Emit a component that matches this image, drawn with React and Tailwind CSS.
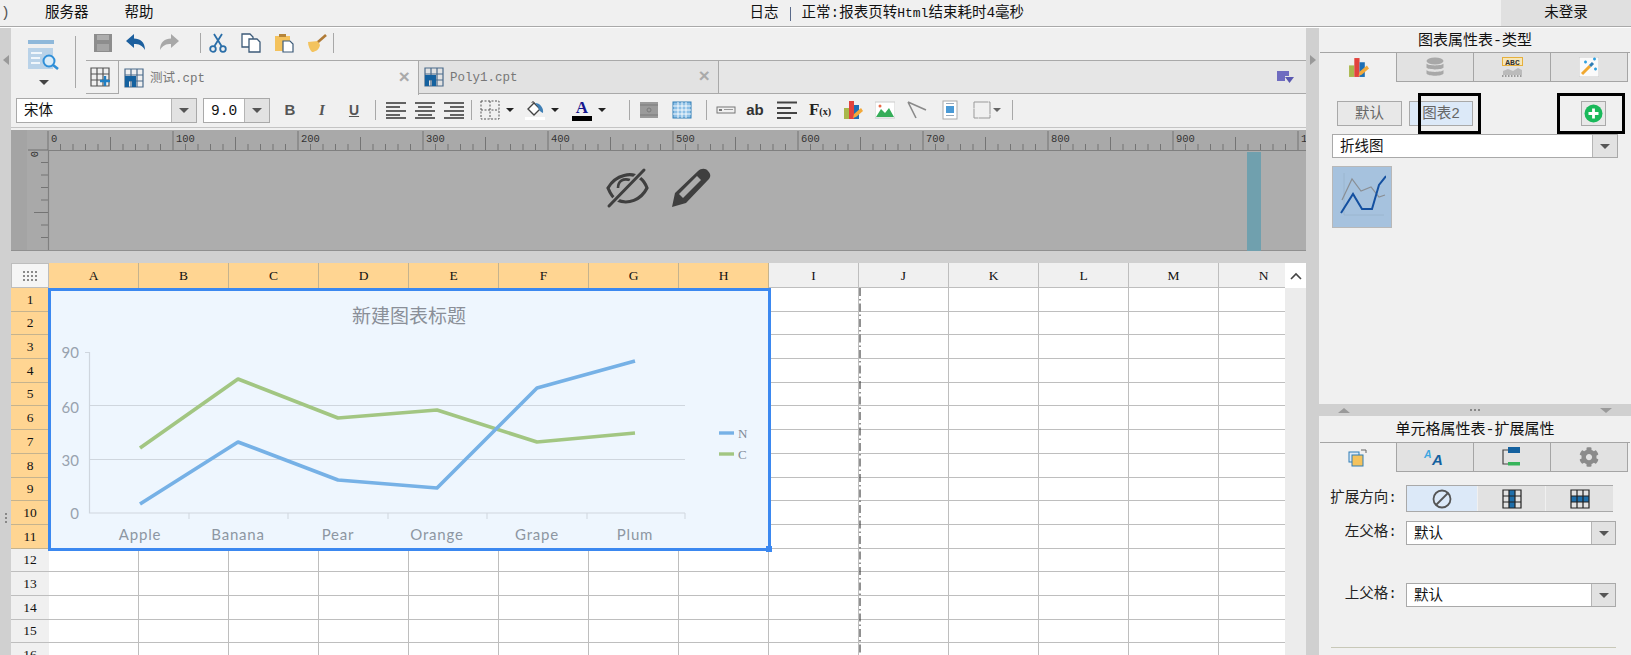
import { FaCog } from 'react-icons/fa'

const cols = ['A', 'B', 'C', 'D', 'E', 'F', 'G', 'H', 'I', 'J', 'K', 'L', 'M', 'N']
const rows = [1, 2, 3, 4, 5, 6, 7, 8, 9, 10, 11, 12, 13, 14, 15, 16]
const pointsX = [140, 238, 338, 437, 537, 635]
const blueY = [504, 442, 480, 488, 388, 361]
const greenY = [448, 379, 418, 410, 442, 433]
const line = (ys) => ys.map((y, i) => `${pointsX[i]},${y}`).join(' ')

function Icon({ size = 20, children, className = '' }) {
  return (
    <svg width={size} height={size} viewBox="0 0 20 20" className={className}>
      {children}
    </svg>
  )
}

function ChartIcon({ size = 20 }) {
  return (
    <Icon size={size}>
      <rect x="1" y="8" width="5" height="11" fill="#a9b84c" />
      <rect x="6" y="1" width="5" height="18" fill="#e2433d" />
      <rect x="11" y="5" width="5" height="14" fill="#1d6fb5" />
      <path d="M10 18 L11 14 L18 8 L20 11 L13 17Z" fill="#f2a93b" />
    </Icon>
  )
}

function SheetIcon({ plus }) {
  return (
    <Icon>
      <path d="M1 1H19V19H1Z M7 1V19 M13 1V19 M1 7H19 M1 13H19" fill="none" stroke={plus ? '#555' : '#4a6a8a'} strokeWidth="1.2" />
      {plus ? (
        <path d="M15 9V19 M10 14H20" stroke="#1f7fc4" strokeWidth="2.4" />
      ) : (
        <path d="M1 8H12V19H8V13H5V19H1Z" fill="#14619f" />
      )}
    </Icon>
  )
}

function Sep({ h = 'h-[20px]' }) {
  return <div className={`w-px ${h} bg-[#a8a8a8] shrink-0`} />
}

function Caret({ className = '' }) {
  return <div className={`w-0 h-0 border-x-[4px] border-x-transparent border-t-[4px] border-t-[#222] ${className}`} />
}

function Slot({ w = 'w-[33px]', children }) {
  return <div className={`${w} h-[24px] shrink-0 flex items-center justify-center gap-[6px]`}>{children}</div>
}

function Select({ value, className = '', arrow = 'w-[25px]' }) {
  return (
    <div className={`flex border border-[#a9a9a9] bg-white ${className}`}>
      <div className="flex-1 pl-[7px] text-[14.5px] leading-[25px] text-[#111] overflow-hidden">{value}</div>
      <div className={`${arrow} bg-[#e2e2e2] border-l border-[#b5b5b5] flex items-center justify-center`}>
        <div className="w-0 h-0 border-x-[5px] border-x-transparent border-t-[5px] border-t-[#555]" />
      </div>
    </div>
  )
}

function PanelTabs({ icons }) {
  return (
    <div className="flex h-[30px] w-[310px] ml-px border-t border-[#a5a5a5]">
      {icons.map((icon, i) => (
        <div
          key={i}
          className={
            i === 0
              ? 'w-[77px] flex items-center justify-center border-r border-[#a5a5a5]'
              : 'w-[77px] flex items-center justify-center border-r border-b border-[#a5a5a5] bg-[#e2e2e2]'
          }
        >
          {icon}
        </div>
      ))}
    </div>
  )
}

function Ruler() {
  const ticks = []
  for (let i = 0; i <= 100; i++) {
    const x = 48 + i * 12.5
    if (x > 1306) break
    const y1 = i % 10 === 0 ? 131 : i % 5 === 0 ? 137 : 144
    ticks.push(<line key={i} x1={x} x2={x} y1={y1} y2="150" stroke="#6e6e6e" strokeWidth="0.9" />)
    if (i % 10 === 0) {
      ticks.push(
        <text key={`t${i}`} x={x + 3} y="142" fontSize="10.5" fontFamily="Liberation Mono, monospace" fill="#333">
          {i * 10}
        </text>
      )
    }
  }
  const vticks = []
  for (let i = 1; i < 8; i++) {
    const y = 150 + i * 12.5
    vticks.push(<line key={i} x1={i === 5 ? 34 : 41} x2="48" y1={y} y2={y} stroke="#6e6e6e" strokeWidth="0.9" />)
  }
  return (
    <svg width="1295" height="121" viewBox="11 130 1295 121" className="block shrink-0">
      <rect x="11" y="130" width="1295" height="121" fill="#adadad" />
      <rect x="11" y="130" width="1295" height="20" fill="#a9a9a9" />
      <rect x="11" y="130" width="16" height="121" fill="#a4a4a4" />
      <rect x="27" y="150" width="21" height="101" fill="#a9a9a9" />
      {ticks}
      {vticks}
      <line x1="28" x2="48" y1="150" y2="150" stroke="#6e6e6e" />
      <text x="0" y="0" fontSize="10.5" fontFamily="Liberation Mono, monospace" fill="#333" transform="translate(31 151) rotate(90)">0</text>
      <line x1="48" x2="1306" y1="150.5" y2="150.5" stroke="#808080" strokeWidth="1.2" />
      <line x1="48.5" x2="48.5" y1="150" y2="251" stroke="#808080" strokeWidth="1.2" />
      <line x1="11" x2="1306" y1="250.5" y2="250.5" stroke="#909090" />
      <rect x="1247" y="152" width="14" height="99" fill="#70a0ae" />
      {/* hidden eye */}
      <g fill="none" stroke="#3f3f3f">
        <path d="M608 188 C616 174 632 172 640 178 C644 181 646 185 647 188 C641 200 628 205 617 200 C613 198 610 193 608 188Z" strokeWidth="3.2" />
        <path d="M618 188 C618 181 623 178 630 180" strokeWidth="2.6" />
        <path d="M644 170 L609 206" stroke="#adadad" strokeWidth="6" />
        <path d="M644 170 L609 206" strokeWidth="3" strokeLinecap="round" />
      </g>
      {/* pencil */}
      <path d="M672 207 L675 193 L698 171 C701 168 706 168 708 171 C711 174 711 177 708 180 L686 203Z" fill="#3f3f3f" />
      <path d="M679 194 L697 176 L701 180 L683 198Z" fill="#adadad" />
    </svg>
  )
}

function Chart() {
  const ticksX = [89, 189, 288, 388, 487, 587, 685]
  const labels = [[140, 'Apple'], [238, 'Banana'], [338, 'Pear'], [437, 'Orange'], [537, 'Grape'], [635, 'Plum']]
  const yLabels = [[358, '90'], [413, '60'], [466, '30'], [519, '0']]
  return (
    <div className="absolute left-[37px] top-[25px] w-[723px] h-[263px] border-[3px] border-[#3b88f0] bg-[#eef6fe]">
      <svg width="723" height="263" viewBox="48 288 723 263" className="absolute -left-[3px] -top-[3px]">
        <line x1="89" x2="685" y1="405.5" y2="405.5" stroke="#cfd6de" />
        <line x1="89" x2="685" y1="459.5" y2="459.5" stroke="#cfd6de" />
        <path d="M85 352.5H89.5V513H685" fill="none" stroke="#cfd6de" strokeWidth="1.2" />
        {ticksX.slice(1).map((x) => (
          <line key={x} x1={x} x2={x} y1="513" y2="519" stroke="#cfd6de" />
        ))}
        <polyline points={line(greenY)} fill="none" stroke="#a2c682" strokeWidth="3.7" strokeLinejoin="round" />
        <polyline points={line(blueY)} fill="none" stroke="#76b1e6" strokeWidth="3.7" strokeLinejoin="round" />
        <text x="409" y="323" textAnchor="middle" fontSize="19" fill="#8a8f98" fontFamily="Noto Sans CJK SC, sans-serif">新建图表标题</text>
        {yLabels.map(([y, t]) => (
          <text key={t} x="79" y={y} textAnchor="end" fontSize="15" fill="#98a2ae" fontFamily="Lato, sans-serif">{t}</text>
        ))}
        {labels.map(([x, t]) => (
          <text key={t} x={x} y="540" textAnchor="middle" fontSize="15" letterSpacing="0.8" fill="#8d96a2" fontFamily="Lato, sans-serif">{t}</text>
        ))}
        <line x1="719" x2="734" y1="433" y2="433" stroke="#76b1e6" strokeWidth="3.4" />
        <line x1="719" x2="734" y1="454" y2="454" stroke="#a2c682" strokeWidth="3.4" />
        <text x="738" y="438" fontSize="13" fill="#7f8a96" fontFamily="Liberation Serif, serif">N</text>
        <text x="738" y="459" fontSize="13" fill="#7f8a96" fontFamily="Liberation Serif, serif">C</text>
      </svg>
      <div className="absolute -right-[4px] -bottom-[4px] w-[6px] h-[6px] bg-[#3b88f0]" />
    </div>
  )
}

function Grid() {
  return (
    <div className="relative w-[1274px] overflow-hidden font-['Liberation_Serif',serif]">
      <div className="grid grid-cols-[38px_repeat(14,90px)]">
        <div className="h-[25px] bg-[#f5f5f5] border border-[#bdbdbd] flex items-center justify-center">
          <div className="grid grid-cols-4 gap-[2px]">
            {Array.from({ length: 12 }).map((_, i) => (
              <div key={i} className="w-[2px] h-[2px] bg-[#8a8a8a]" />
            ))}
          </div>
        </div>
        {cols.map((c, i) => (
          <div
            key={c}
            className={
              i < 8
                ? 'h-[25px] pt-[2px] bg-[#ffd592] border-r border-[#c5b38e] flex items-center justify-center text-[13.5px] text-[#111]'
                : 'h-[25px] pt-[2px] bg-[#f0f0f0] border-r border-b border-[#bebebe] flex items-center justify-center text-[13.5px] text-[#111]'
            }
          >
            {c}
          </div>
        ))}
        {rows.map((r) => (
          <div key={r} className="contents">
            <div
              className={
                r <= 11
                  ? 'h-[23.7px] pt-[1px] bg-[#ffd592] border-b border-[#c5b38e] flex items-center justify-center text-[13.5px] text-[#111]'
                  : 'h-[23.7px] pt-[1px] bg-[#f0f0f0] border-b border-[#bebebe] flex items-center justify-center text-[13.5px] text-[#111]'
              }
            >
              {r}
            </div>
            {cols.map((c) => (
              <div key={c} className="h-[23.7px] bg-white border-r border-b border-[#bebebe]" />
            ))}
          </div>
        ))}
      </div>
      <svg width="2" height="367" className="absolute left-[848px] top-[25px]">
        <line x1="1" x2="1" y1="0" y2="367" stroke="#222" strokeWidth="1" strokeDasharray="8 3 1.5 3" />
      </svg>
      <Chart />
    </div>
  )
}

function Toolbar() {
  return (
    <div className="h-[102px] shrink-0 flex flex-col bg-[#f0f0f0]">
      <div className="flex h-[66px]">
        <div className="w-[64px] shrink-0 flex flex-col items-center pt-[11px] pl-[1px]">
          <svg width="32" height="32" viewBox="0 0 32 32">
            <rect x="0" y="1" width="26" height="4" fill="#8fb8da" />
            <rect x="0" y="9" width="25" height="21" fill="#b9d2e8" />
            <path d="M3 14H14 M3 19H12 M3 24H12" stroke="#f0f6fb" strokeWidth="2" />
            <circle cx="21" cy="22" r="5.5" fill="#dbecf8" stroke="#2f8fd8" strokeWidth="2" />
            <path d="M25 26L30 30" stroke="#2f8fd8" strokeWidth="2.6" />
          </svg>
          <Caret className="mt-[9px] border-x-[5px] border-t-[5px] border-t-[#444]" />
        </div>
        <div className="w-px h-[52px] mt-[8px] bg-[#a8a8a8] shrink-0" />
        <div className="flex-1 ml-[10px] flex flex-col min-w-0">
          <div className="h-[32px] pb-[2px] flex items-center">
            <Slot>
              <Icon>
                <path d="M1 1H19V19H1Z" fill="#8d8d8d" />
                <rect x="4" y="2" width="12" height="5" fill="#adadad" />
                <rect x="4" y="11" width="12" height="7" fill="#a5a5a5" />
              </Icon>
            </Slot>
            <Slot>
              <Icon>
                <path d="M0 8 L8 1 V5.5 C14 5.5 19 9 19 17 C16 12 13 11 8 11 V15Z" fill="#1c5f9e" />
              </Icon>
            </Slot>
            <Slot>
              <Icon>
                <path d="M20 8 L12 1 V5.5 C6 5.5 1 9 1 17 C4 12 7 11 12 11 V15Z" fill="#a8a8a8" />
              </Icon>
            </Slot>
            <div className="w-[15px] shrink-0" />
            <Sep />
            <Slot>
              <Icon>
                <path d="M6.5 13 L14 1 M13.5 13 L6 1" stroke="#2a6ea8" strokeWidth="1.8" fill="none" />
                <circle cx="5" cy="16" r="2.8" fill="none" stroke="#2a6ea8" strokeWidth="1.8" />
                <circle cx="15" cy="16" r="2.8" fill="none" stroke="#2a6ea8" strokeWidth="1.8" />
              </Icon>
            </Slot>
            <Slot>
              <Icon>
                <path d="M1 1H9L12 4V14H1Z" fill="#fff" stroke="#3c5a78" strokeWidth="1.3" />
                <path d="M8 6H16L19 9V19H8Z" fill="#fff" stroke="#3c5a78" strokeWidth="1.3" />
              </Icon>
            </Slot>
            <Slot>
              <Icon>
                <rect x="1" y="3" width="15" height="15" fill="#f4c25c" />
                <rect x="5" y="1" width="7" height="3" fill="#b5853a" />
                <path d="M9 8H16L19 11V19H9Z" fill="#fff" stroke="#3c5a78" strokeWidth="1.2" />
              </Icon>
            </Slot>
            <Slot>
              <Icon>
                <path d="M1 9 L11 8 L13 12 C12 17 8 19 5 19 C3 17 1 13 1 9Z" fill="#f3c35e" />
                <path d="M11 9 L19 2" stroke="#b07a35" strokeWidth="2.6" />
              </Icon>
            </Slot>
            <Sep />
          </div>
          <div className="h-[34px] flex border-y border-[#a9a9a9] bg-[#e6e6e6] relative">
            <div className="w-[33px] shrink-0 flex items-center pl-[4px] bg-[#f0f0f0] border-r border-[#a9a9a9]">
              <SheetIcon plus />
            </div>
            <div className="w-[300px] shrink-0 flex items-center pl-[5px] pr-[8px] gap-[6px] bg-[#f0f0f0] border-r border-[#a9a9a9] h-[34px]">
              <SheetIcon />
              <span className="flex-1 pt-[2px] text-[12.5px] text-[#777] font-['Liberation_Mono','Noto_Sans_CJK_SC',monospace]">测试.cpt</span>
              <span className="text-[#aaa] text-[19px] leading-none font-bold">×</span>
            </div>
            <div className="w-[300px] shrink-0 flex items-center pl-[5px] pr-[8px] gap-[6px] bg-[#e2e2e2] border-r border-[#a9a9a9]">
              <SheetIcon />
              <span className="flex-1 pt-[2px] text-[12.5px] text-[#777] font-['Liberation_Mono','Noto_Sans_CJK_SC',monospace]">Poly1.cpt</span>
              <span className="text-[#aaa] text-[19px] leading-none font-bold">×</span>
            </div>
            <div className="flex-1 flex items-center justify-end pr-[12px]">
              <svg width="17" height="12" viewBox="0 0 17 12">
                <path d="M0 0H12V5H8V10H0Z" fill="#6f6cc0" />
                <path d="M8 6H17L12.5 12Z" fill="#5a58b0" />
              </svg>
            </div>
          </div>
        </div>
      </div>
      <div className="h-[34px] flex items-start pt-[4px] pl-[5px] border-b border-[#c4c4c4]">
        <Select value="宋体" className="w-[181px] h-[25px]" />
        <Select value="9.0" className="w-[67px] h-[25px] ml-[6px]" />
        <div className="flex items-center ml-[4px]">
          <Slot w="w-[32px]"><span className="text-[15px] font-bold text-[#555] font-['Liberation_Sans',sans-serif]">B</span></Slot>
          <Slot w="w-[32px]"><span className="text-[15px] font-bold italic text-[#555] font-['Liberation_Serif',serif]">I</span></Slot>
          <Slot w="w-[32px]"><span className="text-[14px] font-bold underline text-[#555] font-['Liberation_Sans',sans-serif]">U</span></Slot>
          <div className="w-[5px]" />
          <Sep />
          <div className="w-[5px]" />
          <Slot w="w-[29px]"><Icon><path d="M0 3H20 M0 7H14 M0 11H20 M0 15H14 M0 18H20" stroke="#333" strokeWidth="1.6" /></Icon></Slot>
          <Slot w="w-[29px]"><Icon><path d="M0 3H20 M3 7H17 M0 11H20 M3 15H17 M0 18H20" stroke="#333" strokeWidth="1.6" /></Icon></Slot>
          <Slot w="w-[29px]"><Icon><path d="M0 3H20 M6 7H20 M0 11H20 M6 15H20 M0 18H20" stroke="#333" strokeWidth="1.6" /></Icon></Slot>
          <div className="w-[3px]" />
          <Sep />
          <div className="w-[3px]" />
          <Slot w="w-[44px]">
            <Icon><path d="M1 1H19V19H1Z M10 1V19 M1 10H19" fill="none" stroke="#555" strokeWidth="1" strokeDasharray="2 1.5" /></Icon>
            <Caret />
          </Slot>
          <Slot w="w-[46px]">
            <Icon>
              <rect x="0" y="17" width="20" height="3" fill="#fff" />
              <path d="M3 9L9 3L15 9L9 15Z" fill="#fff" stroke="#444" strokeWidth="1.4" />
              <path d="M9 3C9 1 7 1 7 3" fill="none" stroke="#444" />
              <path d="M10 3C15 3 19 8 18 13C15 12 14 10 13 7Z" fill="#3f7fb5" />
            </Icon>
            <Caret />
          </Slot>
          <Slot w="w-[48px]">
            <div className="flex flex-col items-center w-[20px]">
              <span className="text-[17px] leading-[15px] font-bold text-[#16168f] font-['Liberation_Serif',serif]">A</span>
              <div className="w-[20px] h-[5px] bg-black mt-[1px]" />
            </div>
            <Caret />
          </Slot>
          <div className="w-[16px]" />
          <Sep />
          <Slot w="w-[38px]">
            <Icon><rect x="1" y="2" width="18" height="16" fill="#9a9a9a" /><path d="M1 5H19 M1 15H19" stroke="#7a7a7a" /><circle cx="10" cy="10" r="2" fill="none" stroke="#7a7a7a" /></Icon>
          </Slot>
          <Slot w="w-[28px]">
            <Icon><rect x="1" y="2" width="18" height="16" fill="#8ec0e6" stroke="#2e7db5" /><path d="M1 6H19 M1 10H19 M1 14H19 M6 2V18 M10 2V18 M14 2V18" stroke="#fff" strokeWidth="0.9" /></Icon>
          </Slot>
          <div className="w-[10px]" />
          <Sep />
          <div className="w-[5px]" />
          <Slot w="w-[28px]">
            <Icon><rect x="1" y="7" width="18" height="6" fill="none" stroke="#777" /><rect x="3" y="9" width="3" height="2" fill="#777" /><rect x="8" y="9" width="9" height="1" fill="#999" /></Icon>
          </Slot>
          <Slot w="w-[30px]"><span className="text-[15px] font-bold text-[#333] font-['Liberation_Sans',sans-serif]">ab</span></Slot>
          <Slot w="w-[33px]"><Icon><path d="M0 2.5H20 M0 8H14 M0 13H20 M0 18H14" stroke="#444" strokeWidth="2" /></Icon></Slot>
          <Slot w="w-[34px]"><span className="text-[17px] font-bold text-[#222] font-['Liberation_Serif',serif] whitespace-nowrap">F<span className="text-[10px]">(x)</span></span></Slot>
          <Slot w="w-[32px]"><ChartIcon /></Slot>
          <Slot w="w-[32px]">
            <Icon><rect x="0" y="2" width="20" height="16" fill="#fff" stroke="#ccc" /><path d="M1 17L6 9L10 13L14 8L19 17Z" fill="#36ad59" /><circle cx="5" cy="6" r="1.5" fill="#ea6a4a" /></Icon>
          </Slot>
          <Slot w="w-[32px]"><Icon><path d="M1 2L19 10 M1 2L9 18" stroke="#8a8a8a" strokeWidth="1.6" fill="none" /></Icon></Slot>
          <Slot w="w-[33px]">
            <Icon><rect x="3" y="1" width="14" height="18" fill="#fff" stroke="#aaa" /><rect x="6" y="6" width="8" height="7" fill="#4a9ad6" /><path d="M6 3.5H14 M6 15.5H14" stroke="#9ab" /></Icon>
          </Slot>
          <Slot w="w-[40px]">
            <Icon><rect x="2" y="2" width="16" height="16" fill="none" stroke="#999" strokeDasharray="14 0.5" /></Icon>
            <Caret className="-ml-[5px] border-t-[#666]" />
          </Slot>
          <div className="w-[6px]" />
          <Sep />
        </div>
      </div>
    </div>
  )
}

function RightPanel() {
  return (
    <div className="w-[312px] shrink-0 bg-[#f0f0f0] flex flex-col">
      <div className="h-[376px] shrink-0">
        <div className="h-[24px] text-center text-[15px] leading-[28px] text-[#111]">图表属性表-类型</div>
        <PanelTabs
          icons={[
            <ChartIcon key="chart" size={21} />,
            <Icon key="db" size={20}>
              <ellipse cx="10" cy="4" rx="8.5" ry="3.5" fill="#a8a8a8" />
              <path d="M1.5 6.5C3 9 17 9 18.5 6.5V10.5C17 13 3 13 1.5 10.5Z M1.5 13C3 15.5 17 15.5 18.5 13V16.5C17 19.5 3 19.5 1.5 16.5Z" fill="#a8a8a8" />
            </Icon>,
            <svg key="abc" width="21" height="20" viewBox="0 0 21 20">
              <rect x="0.5" y="0.5" width="20" height="8" fill="#f6e6b8" stroke="#e6b03c" />
              <text x="10.5" y="7.5" textAnchor="middle" fontSize="8" fontWeight="bold" fill="#333" fontFamily="Liberation Mono, monospace">ABC</text>
              <path d="M1 18V14L6 12L11 14L16 11L20 13V18Z" fill="#bbb" />
              <path d="M0 19H21" stroke="#555" strokeDasharray="1.5 1.5" />
            </svg>,
            <Icon key="wand" size={20}>
              <rect x="0" y="0" width="20" height="20" fill="#fafafa" stroke="#ccc" />
              <path d="M3 17L11 9" stroke="#f0a830" strokeWidth="3" />
              <path d="M11 9L14 6" stroke="#2e7db5" strokeWidth="3" />
              <path d="M5 5H8 M6.5 3.5V6.5 M14 2H17 M15.5 .5V3.5 M15 12H18 M16.5 10.5V13.5" stroke="#2ea0e0" strokeWidth="1.5" />
            </Icon>,
          ]}
        />
        <div className="relative flex items-center mt-[19px] pl-[18px] h-[25px]">
          <div className="w-[65px] h-[25px] border border-[#a9a9a9] bg-[#e8e8e8] text-center text-[14.5px] leading-[25px] text-[#666]">默认</div>
          <div className="w-[64px] h-[25px] ml-[7px] border border-[#a9a9a9] bg-[#dce9f8] text-center text-[14.5px] leading-[25px] text-[#666]">图表2</div>
          <div className="ml-auto mr-[25px] w-[25px] h-[25px] border border-[#a9a9a9] bg-[#e8e8e8] flex items-center justify-center">
            <svg width="19" height="19" viewBox="0 0 19 19">
              <circle cx="9.5" cy="9.5" r="9" fill="#19b95a" />
              <path d="M9.5 4.5V14.5 M4.5 9.5H14.5" stroke="#fff" strokeWidth="2.8" />
            </svg>
          </div>
          <div className="absolute left-[99px] -top-[8px] w-[63px] h-[41px] border-[3px] border-black" />
          <div className="absolute left-[238px] -top-[8px] w-[68px] h-[41px] border-[3px] border-black" />
        </div>
        <Select value="折线图" className="ml-[13px] mt-[8px] w-[286px] h-[24px]" />
        <div className="ml-[13px] mt-[8px] w-[60px] h-[62px] bg-[#a6c2de] border border-[#b8b8b8] flex items-center justify-center">
          <svg width="48" height="48" viewBox="0 0 48 48">
            <path d="M6 0V42H46" fill="none" stroke="#9ab4cc" strokeWidth="0.8" />
            <path d="M4 27L14 6L23 18L33 14L41 24L47 22" fill="none" stroke="#8a8f95" strokeWidth="1.2" />
            <path d="M3 40L15 21L24 36L34 36L41 12L48 3" fill="none" stroke="#1450a0" strokeWidth="2" />
          </svg>
        </div>
      </div>
      <div className="h-[12px] shrink-0 bg-[#d0d0d0] flex items-center justify-between px-[19px]">
        <div className="w-0 h-0 border-x-[6px] border-x-transparent border-b-[5px] border-b-[#9a9a9a]" />
        <div className="flex gap-[2px]">
          <div className="w-[2px] h-[2px] bg-[#888]" />
          <div className="w-[2px] h-[2px] bg-[#888]" />
          <div className="w-[2px] h-[2px] bg-[#888]" />
        </div>
        <div className="w-0 h-0 border-x-[6px] border-x-transparent border-t-[5px] border-t-[#9a9a9a]" />
      </div>
      <div className="h-[26px] text-center text-[15px] leading-[30px] text-[#111]">单元格属性表-扩展属性</div>
      <PanelTabs
        icons={[
          <Icon key="expand" size={20}>
            <rect x="1" y="4" width="10" height="10" fill="#dbe9f6" stroke="#2e7db5" />
            <rect x="4" y="7" width="11" height="11" fill="#f4c25c" stroke="#2e7db5" />
            <path d="M13 2H18V5" fill="none" stroke="#666" />
          </Icon>,
          <svg key="aa" width="20" height="20" viewBox="0 0 20 20" className="overflow-visible">
            <text x="-1" y="11" fontSize="10.5" fontWeight="bold" fontStyle="italic" fill="#3fa7e0" fontFamily="Liberation Sans, sans-serif">A</text>
            <text x="7" y="18" fontSize="15" fontWeight="bold" fontStyle="italic" fill="#14619f" fontFamily="Liberation Sans, sans-serif">A</text>
          </svg>,
          <Icon key="tree" size={20}>
            <rect x="6" y="0" width="12" height="6" fill="#14619f" />
            <rect x="6" y="15" width="12" height="3.5" fill="#36b45a" />
            <path d="M6 3H1V17H6" fill="none" stroke="#444" strokeWidth="1.2" />
          </Icon>,
          <FaCog key="cog" size={20} color="#8b8b8b" />,
        ]}
      />
      <div className="flex items-center mt-[13px] h-[27px]">
        <div className="w-[78px] text-right text-[14.5px] text-[#222]">扩展方向:</div>
        <div className="ml-[9px] w-[207px] h-[27px] flex border-y border-l border-[#a9a9a9] bg-[#e2e2e2]">
          <div className="w-[70px] bg-[#dce9f8] flex items-center justify-center">
            <svg width="20" height="20" viewBox="0 0 20 20">
              <circle cx="10" cy="10" r="8.5" fill="none" stroke="#555" strokeWidth="1.8" />
              <path d="M4 16L16 4" stroke="#555" strokeWidth="1.8" />
            </svg>
          </div>
          <div className="w-[68px] flex items-center justify-center border-l border-[#f0f0f0]">
            <svg width="20" height="20" viewBox="0 0 20 20">
              <rect x="7" y="1" width="6" height="18" fill="#1f6fab" />
              <path d="M1 1H19V19H1Z M7 1V19 M13 1V19 M1 7H19 M1 13H19" fill="none" stroke="#222" strokeWidth="1.2" />
            </svg>
          </div>
          <div className="flex-1 flex items-center justify-center border-l border-[#f0f0f0]">
            <svg width="20" height="20" viewBox="0 0 20 20">
              <rect x="1" y="7" width="18" height="6" fill="#1f6fab" />
              <path d="M1 1H19V19H1Z M7 1V19 M13 1V19 M1 7H19 M1 13H19" fill="none" stroke="#222" strokeWidth="1.2" />
            </svg>
          </div>
        </div>
      </div>
      <div className="flex items-center mt-[9px]">
        <div className="w-[78px] text-right text-[14.5px] text-[#222]">左父格:</div>
        <Select value="默认" className="ml-[9px] w-[210px] h-[24px]" arrow="w-[24px]" />
      </div>
      <div className="flex items-center mt-[38px]">
        <div className="w-[78px] text-right text-[14.5px] text-[#222]">上父格:</div>
        <Select value="默认" className="ml-[9px] w-[210px] h-[24px]" arrow="w-[24px]" />
      </div>
      <div className="ml-[12px] mt-[40px] w-[285px] h-px bg-[#c8c8b8]" />
    </div>
  )
}

export default function App() {
  return (
    <div className="w-[1631px] h-[655px] overflow-hidden flex flex-col bg-[#f0f0f0] text-[#111] font-['Liberation_Mono','Noto_Sans_CJK_SC',sans-serif]">
      <div className="h-[27px] shrink-0 pt-[1px] flex items-center border-b border-[#a9a9a9] text-[14.5px] relative">
        <span className="w-[45px] shrink-0 text-[#555] pl-[1px]">)</span>
        <span>服务器</span>
        <span className="ml-[36px]">帮助</span>
        <span className="ml-[596px]">日志</span>
        <span className="mx-[11px] w-px h-[14px] bg-[#5a6a8a]" />
        <span>正常:报表页转<span className="text-[13px]">Html</span>结束耗时4毫秒</span>
        <div className="absolute right-0 top-0 w-[130px] h-[26px] bg-[#e0e0e0] text-center leading-[27px]">未登录</div>
      </div>
      <div className="flex flex-1 min-h-0 border-t border-white">
        <div className="w-[11px] shrink-0 bg-[#d0d0d0] flex flex-col items-center">
          <div className="w-0 h-0 mt-[27px] border-y-[5px] border-y-transparent border-r-[6px] border-r-[#999]" />
          <div className="flex flex-col gap-[2px] mt-[448px]">
            <div className="w-[2px] h-[2px] bg-[#888]" />
            <div className="w-[2px] h-[2px] bg-[#888]" />
            <div className="w-[2px] h-[2px] bg-[#888]" />
          </div>
        </div>
        <div className="w-[1295px] shrink-0 flex flex-col">
          <Toolbar />
          <Ruler />
          <div className="h-[12px] shrink-0 bg-[#d0d0d0]" />
          <div className="flex flex-1 min-h-0">
            <Grid />
            <div className="flex-1 bg-[#ececec] flex flex-col">
              <div className="h-[25px] bg-white flex items-center justify-center">
                <svg width="12" height="8" viewBox="0 0 12 8">
                  <path d="M1 7L6 2L11 7" fill="none" stroke="#444" strokeWidth="1.6" />
                </svg>
              </div>
            </div>
          </div>
        </div>
        <div className="w-[13px] shrink-0 bg-[#d0d0d0] flex flex-col items-center">
          <div className="w-0 h-0 mt-[27px] border-y-[5px] border-y-transparent border-l-[6px] border-l-[#999]" />
        </div>
        <RightPanel />
      </div>
    </div>
  )
}
